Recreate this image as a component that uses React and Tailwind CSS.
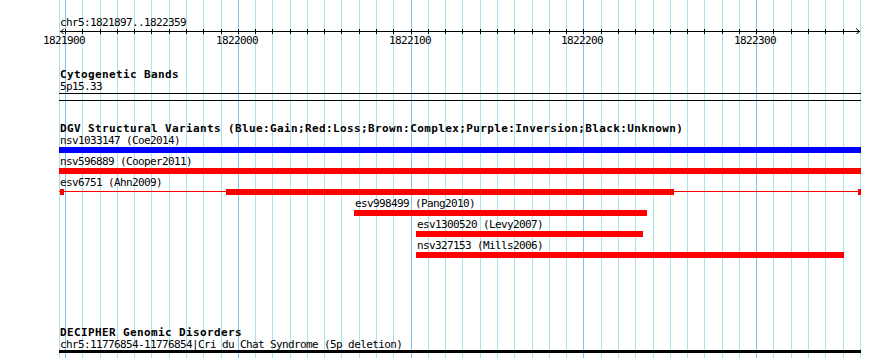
import React from "react";

const STEP = 17.28;
const GRID = Array.from({ length: 46 }, (_, k) => ({ x: Math.round(6 + k * STEP), major: k % 10 === 0 }));
const LABELS = [0, 10, 20, 30, 40].map((k) => ({ x: Math.round(6 + k * STEP), text: String(1821900 + k * 10) }));

const ROWS = [
  { label: "nsv1033147 (Coe2014)", start: 0, width: 802, color: "bg-[#0000ff]" },
  { label: "nsv596889 (Cooper2011)", start: 0, width: 802, color: "bg-[#ff0000]" },
  { label: "esv6751 (Ahn2009)", start: 0, width: 802, split: true },
  { label: "esv998499 (Pang2010)", start: 295, width: 293, color: "bg-[#ff0000]" },
  { label: "esv1300520 (Levy2007)", start: 357, width: 227, color: "bg-[#ff0000]" },
  { label: "nsv327153 (Mills2006)", start: 357, width: 428, color: "bg-[#ff0000]" },
];

const reg = "font-['DejaVu_Sans_Mono',monospace] text-[11px] tracking-[-0.62px] leading-[13px] text-black whitespace-nowrap";
const bold = "font-['DejaVu_Sans_Mono',monospace] font-bold text-[11px] tracking-[0.38px] leading-[13px] text-black whitespace-nowrap";

function Grid() {
  return (
    <svg className="absolute left-[59px] top-0" width="802" height="358">
      <rect x="0" y="0" width="1" height="358" fill="#a8e4ec" />
      <rect x="801" y="0" width="1" height="358" fill="#a8e4ec" />
      {GRID.map((g, i) => (
        <rect key={i} x={g.x} y="0" width="1" height="358" fill={g.major ? "#82c4ec" : "#a8e4ec"} />
      ))}
    </svg>
  );
}

function Ruler() {
  return (
    <svg width="802" height="6" className="block">
      <rect x="1" y="3" width="800" height="1" fill="#000" />
      {GRID.map((g, i) => (
        <rect key={i} x={g.x} y="1" width="1" height="5" fill="#000" />
      ))}
      <polyline points="5,0.5 2,3.5 5,6.5" fill="none" stroke="#000" strokeWidth="1" />
      <polyline points="797,0.5 800.5,3.5 797,6.5" fill="none" stroke="#000" strokeWidth="1" />
    </svg>
  );
}

function SplitBar() {
  return (
    <svg width="802" height="6" className="block">
      <rect x="0" y="2" width="802" height="1" fill="#ff0000" />
      <rect x="1" y="0" width="4" height="6" fill="#ff0000" />
      <rect x="167" y="0" width="448" height="6" fill="#ff0000" />
      <rect x="799" y="0" width="3" height="6" fill="#ff0000" />
    </svg>
  );
}

export default function App() {
  return (
    <div className="relative w-[890px] h-[358px] bg-white overflow-hidden">
      <Grid />
      <div className="relative ml-[59px] w-[802px] pt-[16px] flex flex-col">
        <div className={`h-[12px] pl-px ${reg}`}>chr5:1821897..1822359</div>
        <Ruler />
        <div className="relative h-[13px]">
          {LABELS.map((l) => (
            <span key={l.text} className={`absolute top-0 ${reg}`} style={{ left: l.x - 22 }}>
              {l.text}
            </span>
          ))}
        </div>

        <div className={`mt-[21px] h-[12px] pl-px ${bold}`}>Cytogenetic Bands</div>
        <div className={`h-[13px] pl-px ${reg}`}>5p15.33</div>
        <div className="h-[8px] border-y border-black" />

        <div className={`mt-[21px] h-[12px] pl-px ${bold}`}>
          DGV Structural Variants (Blue:Gain;Red:Loss;Brown:Complex;Purple:Inversion;Black:Unknown)
        </div>
        <div className="flex flex-col gap-[2px]">
          {ROWS.map((r) => (
            <div key={r.label} className="flex flex-col">
              <div className={`h-[13px] ${reg}`} style={{ paddingLeft: r.start + 1 }}>
                {r.label}
              </div>
              {r.split ? (
                <SplitBar />
              ) : (
                <div className={`h-[6px] ${r.color}`} style={{ marginLeft: r.start, width: r.width }} />
              )}
            </div>
          ))}
        </div>

        <div className={`mt-[68px] h-[12px] pl-px ${bold}`}>DECIPHER Genomic Disorders</div>
        <div className={`h-[12px] pl-px ${reg}`}>chr5:11776854-11776854|Cri du Chat Syndrome (5p deletion)</div>
        <div className="h-[3px] bg-black" />
      </div>
    </div>
  );
}
